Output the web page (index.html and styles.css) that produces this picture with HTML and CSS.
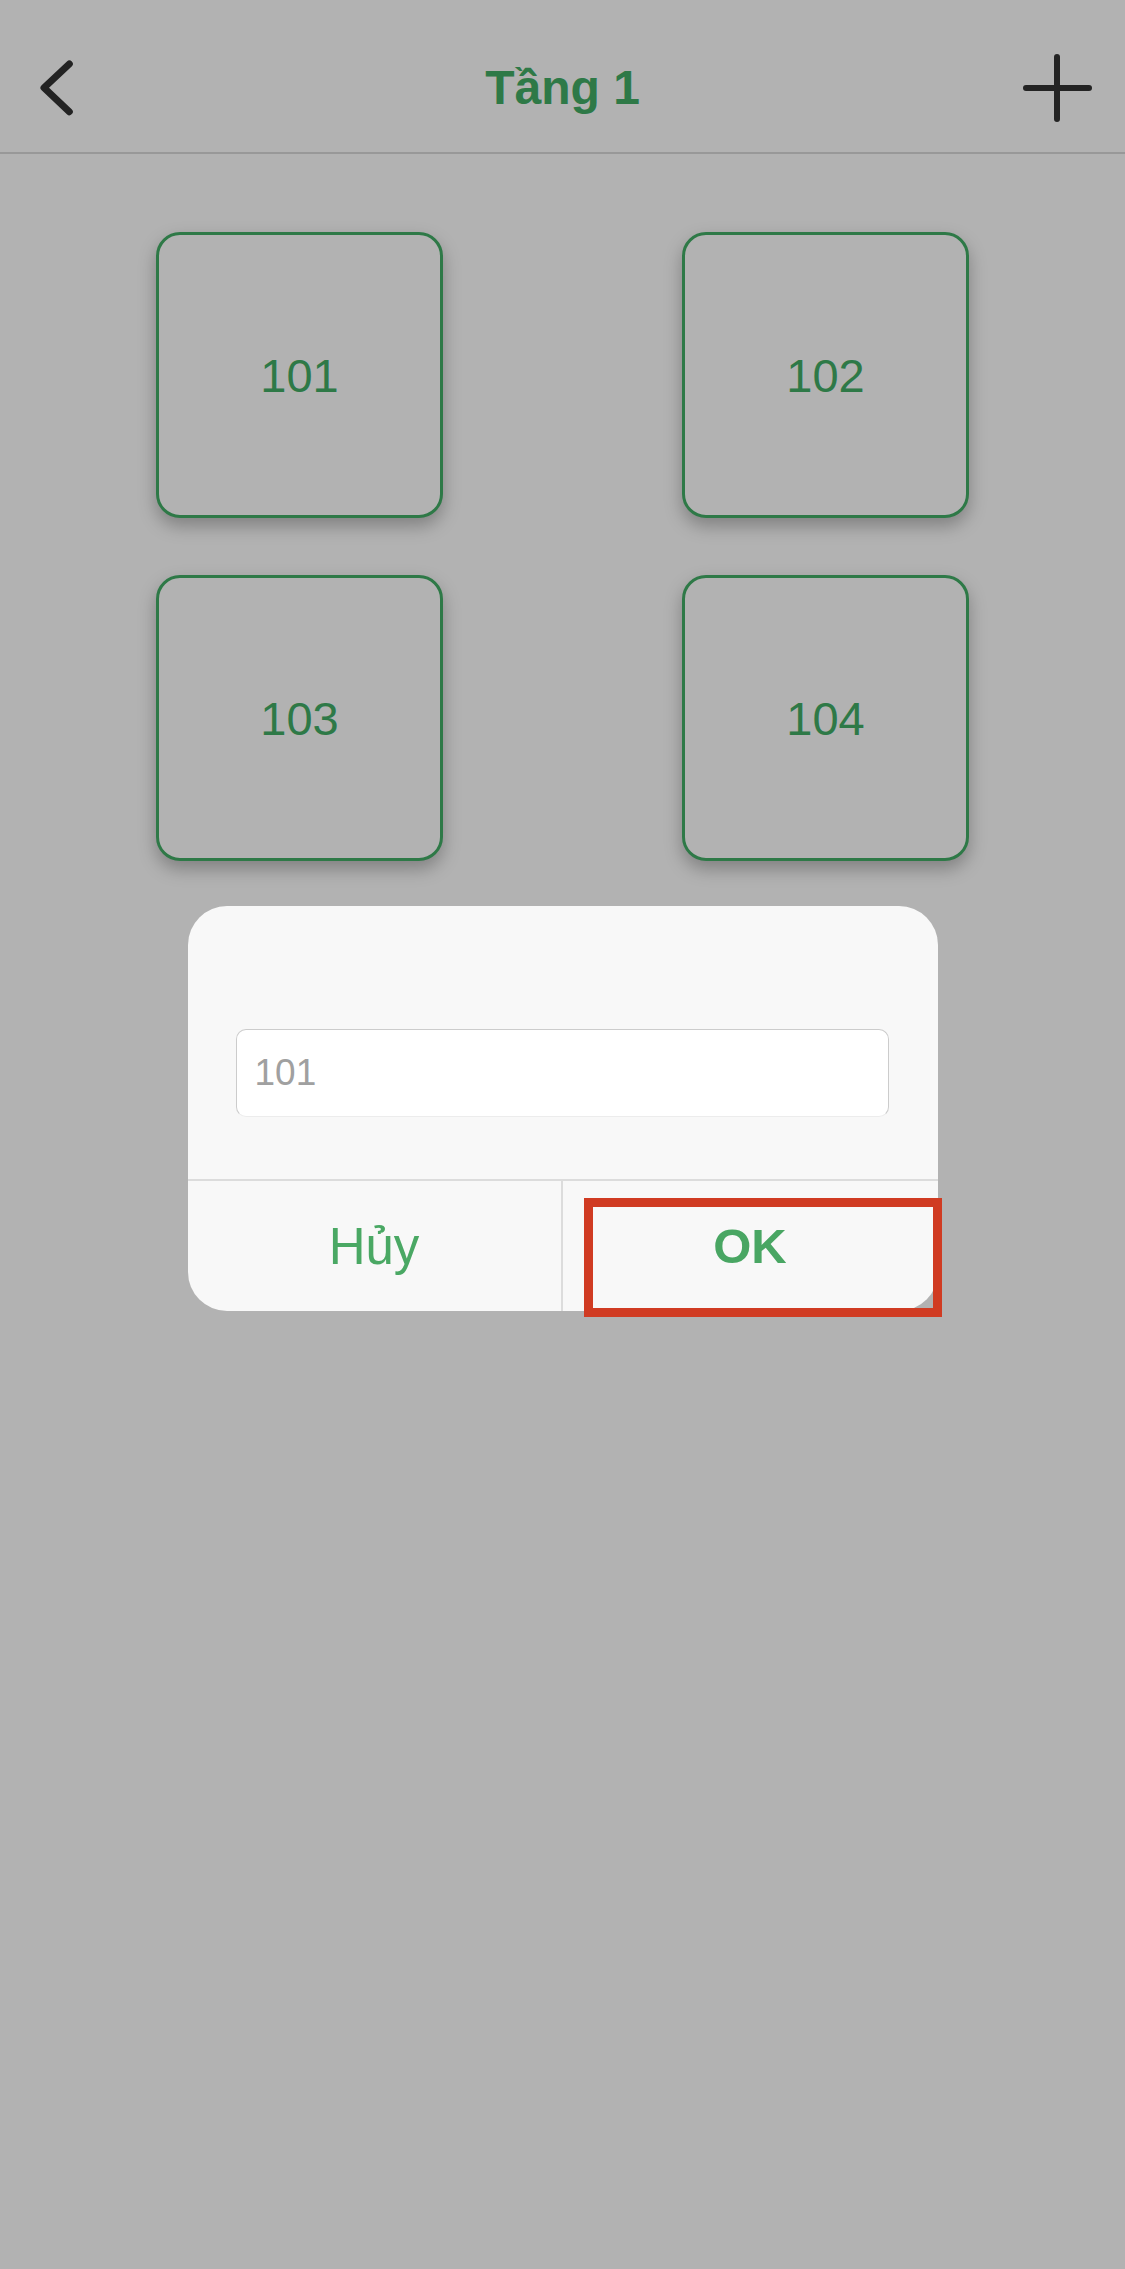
FILE: index.html
```html
<!DOCTYPE html>
<html lang="vi">
<head>
<meta charset="utf-8">
<title>Tầng 1</title>
<link rel="stylesheet" href="styles.css">
</head>
<body>
<div class="page">
  <header class="nav">
    <div class="nav-side nav-left">
      <svg class="icon-back" width="50" height="60" viewBox="0 0 50 60">
        <polyline points="39.3,6 14,29.7 39.3,53.7" fill="none" stroke="#333" stroke-width="7" stroke-linecap="round" stroke-linejoin="round"/>
      </svg>
    </div>
    <h1 class="nav-title">Tầng 1</h1>
    <div class="nav-side nav-right">
      <svg class="icon-plus" width="80" height="80" viewBox="0 0 80 80">
        <line x1="40" y1="9" x2="40" y2="71" stroke="#333" stroke-width="6" stroke-linecap="round"/>
        <line x1="9" y1="40" x2="72" y2="40" stroke="#333" stroke-width="6" stroke-linecap="round"/>
      </svg>
    </div>
  </header>

  <main class="rooms">
    <div class="room">101</div>
    <div class="room">102</div>
    <div class="room">103</div>
    <div class="room">104</div>
  </main>
</div>

<div class="overlay">
  <div class="dialog">
    <div class="dialog-body">
      <input class="dialog-input" type="text" placeholder="101">
    </div>
    <div class="dialog-actions">
      <button class="dialog-btn btn-cancel">Hủy</button>
      <button class="dialog-btn btn-ok">OK</button>
    </div>
    <div class="highlight"></div>
  </div>
</div>
</body>
</html>
```

FILE: styles.css
```css
* {
  box-sizing: border-box;
}

html, body {
  margin: 0;
  padding: 0;
}

body {
  width: 1125px;
  height: 2269px;
  position: relative;
  overflow: hidden;
  background: #ffffff;
  font-family: "Liberation Sans", Arial, sans-serif;
}

.page {
  width: 100%;
}

.nav {
  height: 154px;
  padding-top: 24px;
  border-bottom: 2px solid #dadada;
  display: flex;
  align-items: center;
}

.nav-side {
  width: 160px;
  display: flex;
  align-items: center;
}

.nav-left {
  padding-left: 30px;
}

.nav-right {
  justify-content: flex-end;
  padding-right: 28px;
}

.icon-back,
.icon-plus {
  display: block;
}

.nav-title {
  flex: 1;
  margin: 0;
  text-align: center;
  font-size: 48px;
  font-weight: bold;
  color: #43ae66;
  line-height: 1;
}

.rooms {
  margin-top: 78px;
  display: grid;
  grid-template-columns: 287px 287px;
  column-gap: 239px;
  row-gap: 57px;
  justify-content: center;
}

.room {
  height: 286px;
  border: 3px solid #43ae66;
  border-radius: 24px;
  background: #ffffff;
  box-shadow: 0 8px 18px rgba(0, 0, 0, 0.28);
  display: flex;
  align-items: center;
  justify-content: center;
  font-size: 47px;
  color: #43ae66;
}

.overlay {
  position: absolute;
  inset: 0;
  background: rgba(0, 0, 0, 0.3);
  display: flex;
  flex-direction: column;
  align-items: center;
  padding-top: 906px;
}

.dialog {
  position: relative;
  width: 750px;
  background: #f8f8f8;
  border-radius: 39px;
}

.dialog-body {
  padding: 123px 49px 62px 48px;
}

.dialog-input {
  display: block;
  width: 100%;
  height: 88px;
  border: 1px solid #cccccc;
  border-bottom-color: #ececec;
  border-radius: 10px;
  background: #ffffff;
  padding: 0 0 0 18px;
  font-family: "Liberation Sans", Arial, sans-serif;
  font-size: 37px;
  color: #333;
  outline: none;
}

.dialog-input::placeholder {
  color: #a0a0a0;
}

.dialog-actions {
  display: grid;
  grid-template-columns: 1fr 1fr;
  border-top: 2px solid #dcdcdc;
}

.dialog-btn {
  height: 130px;
  border: none;
  background: transparent;
  font-family: "Liberation Sans", Arial, sans-serif;
  font-size: 51px;
  color: #4aa864;
  padding: 0;
}

.btn-cancel {
  border-right: 2px solid #dcdcdc;
}

.btn-ok {
  font-weight: bold;
  font-size: 49px;
  color: #49a663;
}

.highlight {
  position: absolute;
  left: 396px;
  top: 292px;
  width: 358px;
  height: 119px;
  border: 9px solid #d03b22;
  pointer-events: none;
}
```
